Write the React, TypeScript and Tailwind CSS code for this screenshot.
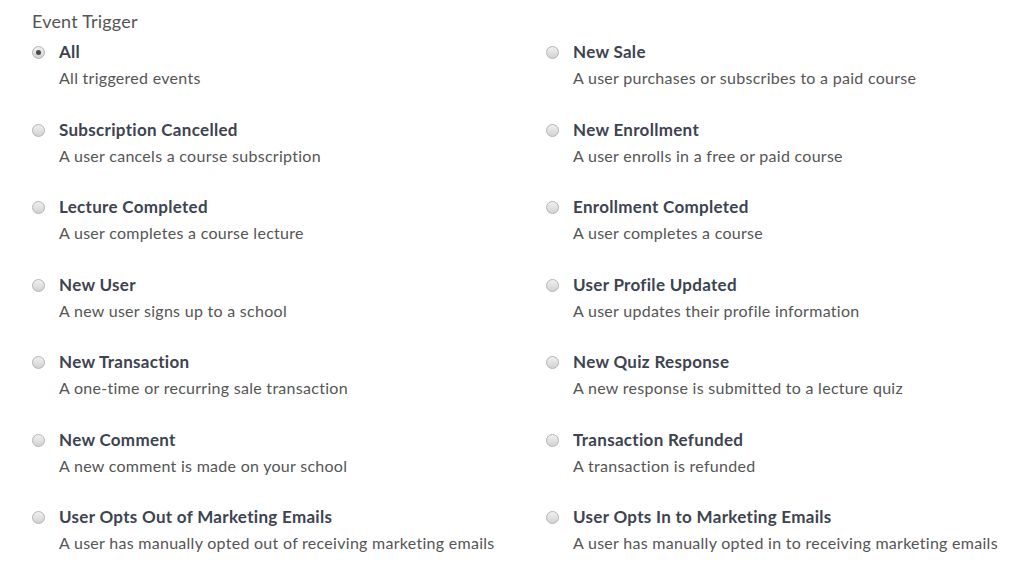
const events = [
  ["All", "All triggered events"],
  ["New Sale", "A user purchases or subscribes to a paid course"],
  ["Subscription Cancelled", "A user cancels a course subscription"],
  ["New Enrollment", "A user enrolls in a free or paid course"],
  ["Lecture Completed", "A user completes a course lecture"],
  ["Enrollment Completed", "A user completes a course"],
  ["New User", "A new user signs up to a school"],
  ["User Profile Updated", "A user updates their profile information"],
  ["New Transaction", "A one-time or recurring sale transaction"],
  ["New Quiz Response", "A new response is submitted to a lecture quiz"],
  ["New Comment", "A new comment is made on your school"],
  ["Transaction Refunded", "A transaction is refunded"],
  ["User Opts Out of Marketing Emails", "A user has manually opted out of receiving marketing emails"],
  ["User Opts In to Marketing Emails", "A user has manually opted in to receiving marketing emails"],
];

function Radio({ checked }: { checked: boolean }) {
  return (
    <span className="mt-[4px] flex h-[13px] w-[13px] shrink-0 items-center justify-center rounded-full border border-[#b4b4b4] bg-gradient-to-b from-[#f0f0f0] to-[#d2d2d2]">
      {checked && <span className="h-[5px] w-[5px] rounded-full bg-[#4a4a4a]" />}
    </span>
  );
}

export default function App() {
  return (
    <div className="min-h-[575px] bg-white pl-[32px] pt-[11px] font-['Lato','Liberation_Sans',sans-serif]">
      <h3 className="text-[18px] leading-[20px] tracking-[0.2px] text-[#555]">Event Trigger</h3>
      <div className="mt-[11px] grid grid-cols-[514px_1fr] gap-y-[31.5px]">
        {events.map(([title, desc], i) => (
          <label key={title} className="flex gap-[14px]">
            <Radio checked={i === 0} />
            <div>
              <div className="text-[17px] font-bold leading-[20px] tracking-[0.3px] text-[#3d4350]">{title}</div>
              <div className="mt-[6px] text-[16px] leading-[20px] tracking-[0.28px] text-[#555]">{desc}</div>
            </div>
          </label>
        ))}
      </div>
    </div>
  );
}
